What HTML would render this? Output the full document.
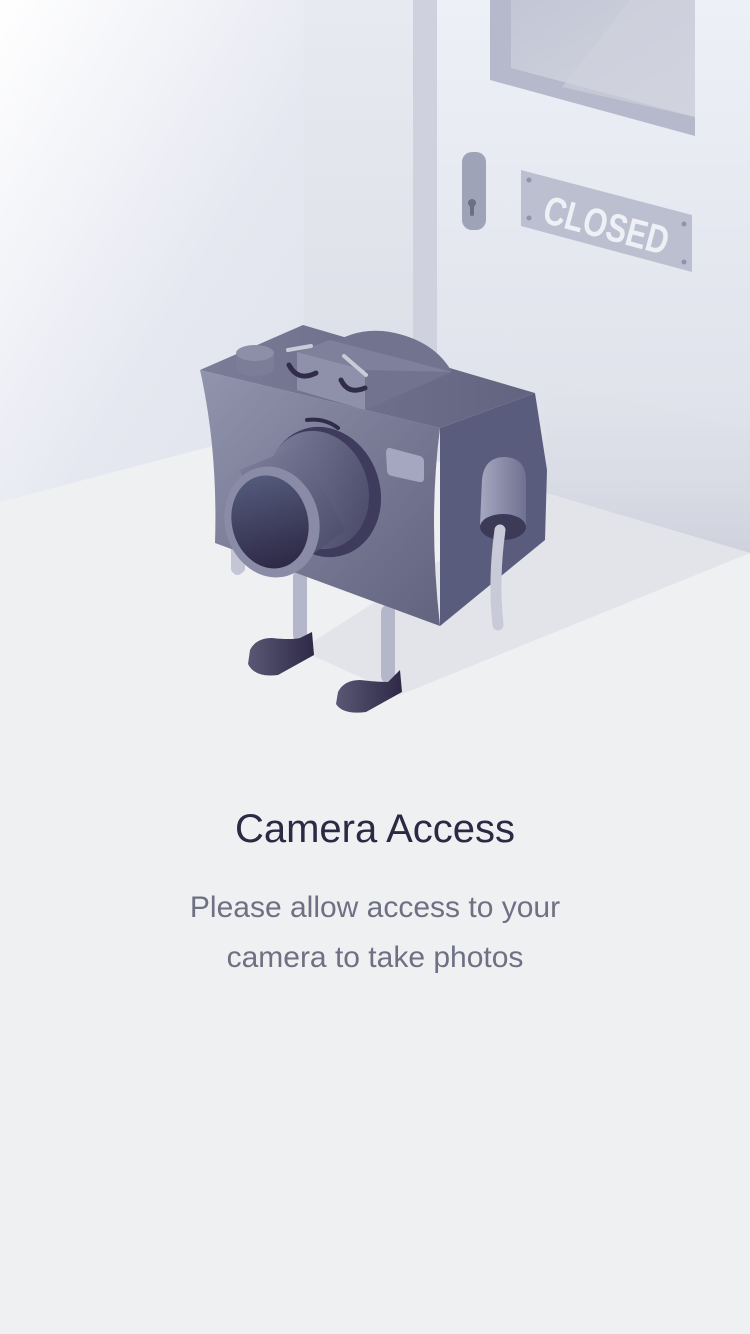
<!DOCTYPE html>
<html><head><meta charset="utf-8"><style>
html,body{margin:0;padding:0;width:750px;height:1334px;overflow:hidden;background:#eff0f2;font-family:"Liberation Sans",sans-serif}
svg{position:absolute;left:0;top:0}
.t{position:absolute;left:0;width:750px;text-align:center}
</style></head><body>
<svg width="750" height="1334" viewBox="0 0 750 1334">
<defs>
<linearGradient id="lw" x1="0" y1="0" x2="1" y2="1"><stop offset="0" stop-color="#ffffff"/><stop offset="0.6" stop-color="#e6e8f1"/><stop offset="1" stop-color="#dfe2ec"/></linearGradient>
<linearGradient id="bw" x1="0" y1="0" x2="0" y2="1"><stop offset="0" stop-color="#e8eaf2"/><stop offset="1" stop-color="#d9dbe4"/></linearGradient>
<linearGradient id="dr" x1="0" y1="0" x2="0" y2="1"><stop offset="0" stop-color="#eef0f8"/><stop offset="1" stop-color="#dcdee7"/></linearGradient>
<linearGradient id="ws" x1="0" y1="0" x2="0" y2="1"><stop offset="0" stop-color="#dcdee6" stop-opacity="0"/><stop offset="1" stop-color="#c9cbd9"/></linearGradient>
<linearGradient id="gl" x1="0" y1="0" x2="1" y2="1"><stop offset="0" stop-color="#c3c6d5"/><stop offset="1" stop-color="#d3d5e0"/></linearGradient>
<linearGradient id="ff" x1="0" y1="0" x2="1" y2="1"><stop offset="0" stop-color="#9194ad"/><stop offset="1" stop-color="#62637f"/></linearGradient>
<linearGradient id="tf" x1="0" y1="0" x2="1" y2="0"><stop offset="0" stop-color="#7a7c98"/><stop offset="1" stop-color="#62647f"/></linearGradient>
<linearGradient id="ln" x1="0" y1="0" x2="0" y2="1"><stop offset="0" stop-color="#535a7a"/><stop offset="1" stop-color="#2e2846"/></linearGradient>
<linearGradient id="br" x1="0" y1="0" x2="1" y2="1"><stop offset="0" stop-color="#7f819d"/><stop offset="1" stop-color="#464664"/></linearGradient>
<linearGradient id="sh" x1="0" y1="0" x2="1" y2="0"><stop offset="0" stop-color="#5a5775"/><stop offset="1" stop-color="#2d2946"/></linearGradient>
<linearGradient id="sc" x1="0" y1="0" x2="1" y2="0"><stop offset="0" stop-color="#a5a8c0"/><stop offset="1" stop-color="#6f7190"/></linearGradient>
</defs>
<polygon points="0,0 304,0 304,422 0,502" fill="url(#lw)"/>
<polygon points="304,0 750,0 750,553 304,422" fill="url(#bw)"/>
<polygon points="437,0 437,470 750,553 750,0" fill="url(#dr)"/>
<rect x="413" y="0" width="24" height="455" fill="#cfd2de"/>
<polygon points="545,380 750,430 750,553 545,493" fill="url(#ws)" opacity="0.7"/>
<polygon points="490,0 695,0 695,136 490,80" fill="#b6b9cb"/>
<polygon points="511,0 695,0 695,117 511,68" fill="url(#gl)"/>
<polygon points="630,0 695,0 695,117 562,87" fill="#d0d2dd" opacity="0.6"/>
<rect x="462" y="152" width="24" height="78" rx="10" fill="#9fa3b8"/>
<circle cx="472" cy="203" r="4" fill="#6c6f88"/><rect x="470" y="203" width="4" height="13" rx="2" fill="#6c6f88"/>
<polygon points="521,170 692,215 692,272 521,226" fill="#bcbfd0"/>
<circle cx="529" cy="180" r="2.5" fill="#9094ab"/><circle cx="529" cy="218" r="2.5" fill="#9094ab"/>
<circle cx="684" cy="224" r="2.5" fill="#9094ab"/><circle cx="684" cy="262" r="2.5" fill="#9094ab"/>
<text x="541" y="222" transform="rotate(15 541 222)" font-family="Liberation Sans Narrow, Liberation Sans" font-weight="bold" font-size="40" fill="#eef0f6" textLength="128" lengthAdjust="spacingAndGlyphs">CLOSED</text>
<polygon points="0,502 304,422 750,553 750,1334 0,1334" fill="#eff0f2"/>
<polygon points="300,650 545,493 750,553 400,695" fill="#e0e2e9" opacity="0.9"/>
<rect x="293" y="570" width="14" height="72" rx="7" fill="#b4b7ca"/>
<rect x="381" y="605" width="14" height="78" rx="7" fill="#b4b7ca"/>
<path d="M231,545 L231,570 Q237,580 245,570 L245,545Z" fill="#c4c6d5"/>
<path d="M250,650 Q256,638 272,638 Q290,640 300,638 L312,632 L314,655 L278,675 Q255,678 248,664Z" fill="url(#sh)"/>
<path d="M338,692 Q344,680 360,680 Q378,682 388,682 L400,670 L402,692 L366,712 Q343,715 336,704Z" fill="url(#sh)"/>
<polygon points="440,428 535,393 547,470 545,540 440,626" fill="#5a5c7e"/>
<path d="M200,370 L440,428 Q428,520 440,626 L215,543 Q218,450 200,370Z" fill="url(#ff)"/>
<polygon points="200,370 303,325 535,393 440,428" fill="url(#tf)"/>
<path d="M330,345 Q360,325 395,333 Q435,342 452,372 L365,410 L297,390 Z" fill="#72748f"/>
<polygon points="297,352 365,370 365,410 297,390" fill="#8f91aa"/>
<polygon points="297,352 330,340 452,372 365,370" fill="#7e809c"/>
<rect x="236" y="354" width="38" height="14" fill="#7b7d99"/>
<ellipse cx="255" cy="368" rx="19" ry="8" fill="#7b7d99"/>
<ellipse cx="255" cy="353" rx="19" ry="8" fill="#8d8fa9"/>
<path d="M288,350 L311,346" stroke="#c9cbd8" stroke-width="4" stroke-linecap="round"/>
<path d="M344,356 L366,375" stroke="#c9cbd8" stroke-width="4" stroke-linecap="round"/>
<path d="M289,365 Q298,382 316,373" stroke="#302c4a" stroke-width="5" fill="none" stroke-linecap="round"/>
<path d="M341,380 Q348,395 365,388" stroke="#302c4a" stroke-width="5" fill="none" stroke-linecap="round"/>
<path d="M307,420 Q325,418 338,428" stroke="#302c4a" stroke-width="4" fill="none" stroke-linecap="round"/>
<path d="M390,448 L420,456 Q424,457 424,462 L424,478 Q424,483 419,482 L392,476 Q387,475 387,470 L386,452 Q387,447 390,448Z" fill="#a5a7c0"/>
<ellipse cx="324" cy="492" rx="56" ry="66" transform="rotate(-18 324 492)" fill="#3e3b5c"/>
<ellipse cx="318" cy="490" rx="50" ry="60" transform="rotate(-18 318 490)" fill="url(#br)"/>
<polygon points="240,470 300,445 345,530 285,575" fill="url(#br)"/>
<ellipse cx="272" cy="522" rx="47" ry="56" transform="rotate(-15 272 522)" fill="#8a8ca7"/>
<ellipse cx="270" cy="522" rx="38" ry="47" transform="rotate(-15 270 522)" fill="url(#ln)"/>
<path d="M482,480 Q484,457 505,457 Q526,458 526,480 L526,525 L480,525Z" fill="url(#sc)"/>
<ellipse cx="503" cy="527" rx="23" ry="13" fill="#3d3a58"/>
<path d="M500,530 Q493,580 498,625" stroke="#c8cad8" stroke-width="11" fill="none" stroke-linecap="round"/>
</svg>
<div class="t" style="top:807px;font-size:40px;color:#2b2a45">Camera Access</div>
<div class="t" style="top:883px;font-size:30px;color:#6f7084;line-height:50px">Please allow access to your<br>camera to take photos</div>
</body></html>
